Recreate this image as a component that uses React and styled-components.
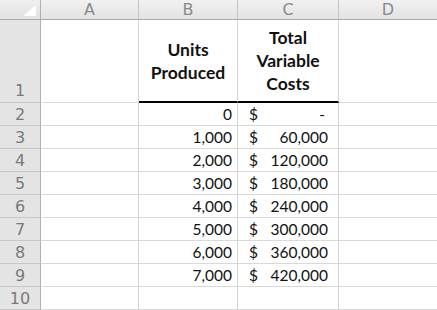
import React from "react";
import styled, { createGlobalStyle } from "styled-components";

const GlobalStyle = createGlobalStyle`
  html, body {
    margin: 0;
    padding: 0;
    background: #fff;
  }
`;

const Sheet = styled.div`
  display: grid;
  grid-template-columns: 41px 98px 99px 101px 99px;
  grid-template-rows: 20px 83px repeat(9, 23px);
  width: 437px;
  font-family: Lato, "Open Sans", sans-serif;
  color: #111;
  overflow: hidden;
`;

const Corner = styled.div`
  position: relative;
  background: linear-gradient(#efefef, #e2e2e2);
  border-right: 1px solid #b0b0b0;
  border-bottom: 1px solid #a8a8a8;
  box-sizing: border-box;

  &::after {
    content: "";
    position: absolute;
    right: 4px;
    bottom: 3px;
    width: 0;
    height: 0;
    border-left: 13px solid transparent;
    border-bottom: 11px solid #fff;
  }
`;

const ColHead = styled.div`
  display: flex;
  align-items: center;
  justify-content: center;
  background: linear-gradient(#f1f1f1, #e3e3e3);
  border-right: 1px solid ${(p) => (p.$last ? "transparent" : "#c4c4c4")};
  border-bottom: 1px solid #a8a8a8;
  box-sizing: border-box;
  font-family: "DejaVu Sans", sans-serif;
  font-size: 16px;
  color: #8a8a8a;
`;

const RowHead = styled.div`
  display: flex;
  align-items: flex-end;
  justify-content: center;
  padding-bottom: ${(p) => (p.$tall ? "1px" : "0")};
  background: #e4e4e4;
  border-right: 1px solid #b0b0b0;
  border-bottom: 1px solid #c8c8c8;
  box-sizing: border-box;
  font-family: "DejaVu Sans", sans-serif;
  font-size: 16px;
  line-height: 21px;
  color: #7a7a7a;
`;

const Cell = styled.div`
  display: flex;
  align-items: center;
  justify-content: ${(p) => p.$justify || "flex-end"};
  padding: 0 ${(p) => p.$padRight || "5px"} 0 ${(p) => p.$padLeft || "5px"};
  border-right: 1px solid #d4d4d4;
  border-bottom: ${(p) => (p.$rule ? "2px solid #000" : "1px solid #d9d9d9")};
  box-sizing: border-box;
  font-size: 15.5px;
  white-space: nowrap;
`;

const HeadCell = styled(Cell)`
  justify-content: center;
  text-align: center;
  font-weight: 700;
  font-size: 17.5px;
  line-height: 23px;
  padding: 0;
`;

const Dollar = styled.span`
  margin-right: auto;
`;

const rows = [
  [0, null],
  [1000, 60000],
  [2000, 120000],
  [3000, 180000],
  [4000, 240000],
  [5000, 300000],
  [6000, 360000],
  [7000, 420000],
];

const fmt = (n) => n.toLocaleString("en-US");

export default function App() {
  return (
    <>
      <GlobalStyle />
      <Sheet>
        <Corner />
        <ColHead>A</ColHead>
        <ColHead>B</ColHead>
        <ColHead>C</ColHead>
        <ColHead $last>D</ColHead>

        <RowHead $tall>1</RowHead>
        <Cell />
        <HeadCell $rule>
          Units
          <br />
          Produced
        </HeadCell>
        <HeadCell $rule>
          Total
          <br />
          Variable
          <br />
          Costs
        </HeadCell>
        <Cell />

        {rows.map(([units, cost], i) => (
          <React.Fragment key={i}>
            <RowHead>{i + 2}</RowHead>
            <Cell />
            <Cell>{fmt(units)}</Cell>
            <Cell $padLeft="11px" $padRight="10px">
              <Dollar>$</Dollar>
              {cost === null ? <span style={{ marginRight: 3 }}>-</span> : fmt(cost)}
            </Cell>
            <Cell />
          </React.Fragment>
        ))}

        <RowHead>10</RowHead>
        <Cell />
        <Cell />
        <Cell />
        <Cell />
      </Sheet>
    </>
  );
}
